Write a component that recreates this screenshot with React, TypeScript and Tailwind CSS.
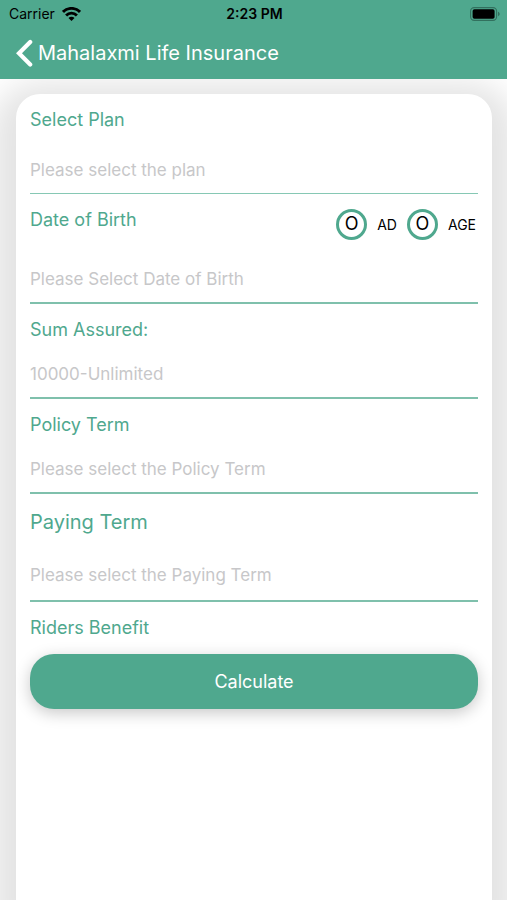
import { ReactNode } from "react";
import clsx from "clsx";

type FieldProps = {
  id: string;
  label: string;
  placeholder: string;
  large?: boolean;
  light?: boolean;
  tight?: boolean;
  children?: ReactNode;
};

const Field = ({ id, label, placeholder, large, light, tight, children }: FieldProps) => {
  return (
    <div className="flex flex-col pt-[14px]">
      <div className="flex items-start justify-between">
        <label
          htmlFor={id}
          className={clsx("text-[#4fa88e]", large ? "text-[20px] leading-7" : "text-[18px] leading-6")}
        >
          {label}
        </label>
        {children}
      </div>
      <input
        id={id}
        type="text"
        placeholder={placeholder}
        className={clsx(
          "w-full bg-transparent text-[17px] text-gray-800 outline-none placeholder:text-[#c7c7c9]",
          tight ? "mt-[9px]" : light || large ? "mt-[14px]" : "mt-4",
          large ? "h-[52px]" : "h-12",
          light ? "border-b border-[#86c8b4]" : "border-b-2 border-[#7fc0ac]"
        )}
      />
    </div>
  );
};

const RoundOption = ({ value }: { value: string }) => {
  return (
    <label className="flex cursor-pointer items-center gap-[10px] text-[14px] text-black">
      <span className="grid h-8 w-[31px] place-items-center">
        <input
          type="radio"
          name="dateType"
          value={value}
          className="col-start-1 row-start-1 size-[31px] appearance-none rounded-full border-3 border-[#4fa88e] bg-white"
        />
        <span className="col-start-1 row-start-1 text-[18px] leading-8">O</span>
      </span>
      {value}
    </label>
  );
};

const StatusBar = () => {
  return (
    <div className="grid grid-cols-3 items-center pt-1 pr-[7px] pl-[9px] text-[14px] leading-5 text-black">
      <div className="flex items-center gap-[7px]">
        <span>Carrier</span>
        <svg width="19" height="14" viewBox="0 0 19 14" fill="none" stroke="#000" strokeWidth="2.9">
          <path d="M1 4.9a12 12 0 0 1 17 0" />
          <path d="M4.1 8.4a7.6 7.6 0 0 1 10.8 0" />
          <path d="M9.5 14 6.5 10.9a4.2 4.2 0 0 1 6 0Z" fill="#000" stroke="none" />
        </svg>
      </div>
      <span className="text-center font-semibold">2:23 PM</span>
      <svg className="justify-self-end" width="30" height="14" viewBox="0 0 30 14">
        <rect x="0.6" y="0.6" width="26" height="12.8" rx="3.6" fill="none" stroke="#32705e" strokeWidth="1.1" />
        <rect x="2.6" y="2.2" width="22" height="9.6" rx="1.8" fill="#000" />
        <path d="M28 4.8v4.4c1-.4 1.7-1.2 1.7-2.2s-.7-1.8-1.7-2.2Z" fill="#32705e" />
      </svg>
    </div>
  );
};

const App = () => {
  return (
    <div className="flex min-h-screen flex-col overflow-hidden bg-white font-['Inter','Liberation_Sans',sans-serif]">
      <header className="z-10 bg-[#4fa88e] pb-3">
        <StatusBar />
        <div className="flex items-center gap-[5px] pt-[15px] pl-4">
          <button type="button" aria-label="Back">
            <svg width="17" height="28" viewBox="0 0 17 28" fill="none" stroke="#fff" strokeWidth="4.2">
              <path d="M14.2 3 3 14.2l11.2 11.2" strokeLinejoin="miter" strokeLinecap="round" />
            </svg>
          </button>
          <h1 className="text-[20px] leading-7 text-white">Mahalaxmi Life Insurance</h1>
        </div>
      </header>
      <main className="flex flex-1 flex-col pt-[15px] pr-[15px] pl-4">
        <form className="flex-1 rounded-t-3xl bg-white px-[14px] shadow-[0_12px_32px_24px_rgba(0,0,0,0.11)]">
          <Field id="plan" label="Select Plan" placeholder="Please select the plan" light />
          <Field id="dob" label="Date of Birth" placeholder="Please Select Date of Birth">
            <div className="flex gap-[10px] pr-[2px]">
              <RoundOption value="AD" />
              <RoundOption value="AGE" />
            </div>
          </Field>
          <Field id="sum" label="Sum Assured:" placeholder="10000-Unlimited" tight />
          <Field id="policyTerm" label="Policy Term" placeholder="Please select the Policy Term" tight />
          <Field id="payingTerm" label="Paying Term" placeholder="Please select the Paying Term" large />
          <h2 className="pt-[14px] text-[18px] leading-6 text-[#4fa88e]">Riders Benefit</h2>
          <button
            type="button"
            className="mt-[14px] h-[55px] w-full cursor-pointer rounded-3xl bg-[#4fa88e] text-[18px] text-white shadow-[0_4px_16px_rgba(0,0,0,0.22)]"
          >
            Calculate
          </button>
        </form>
      </main>
    </div>
  );
};

export default App;
